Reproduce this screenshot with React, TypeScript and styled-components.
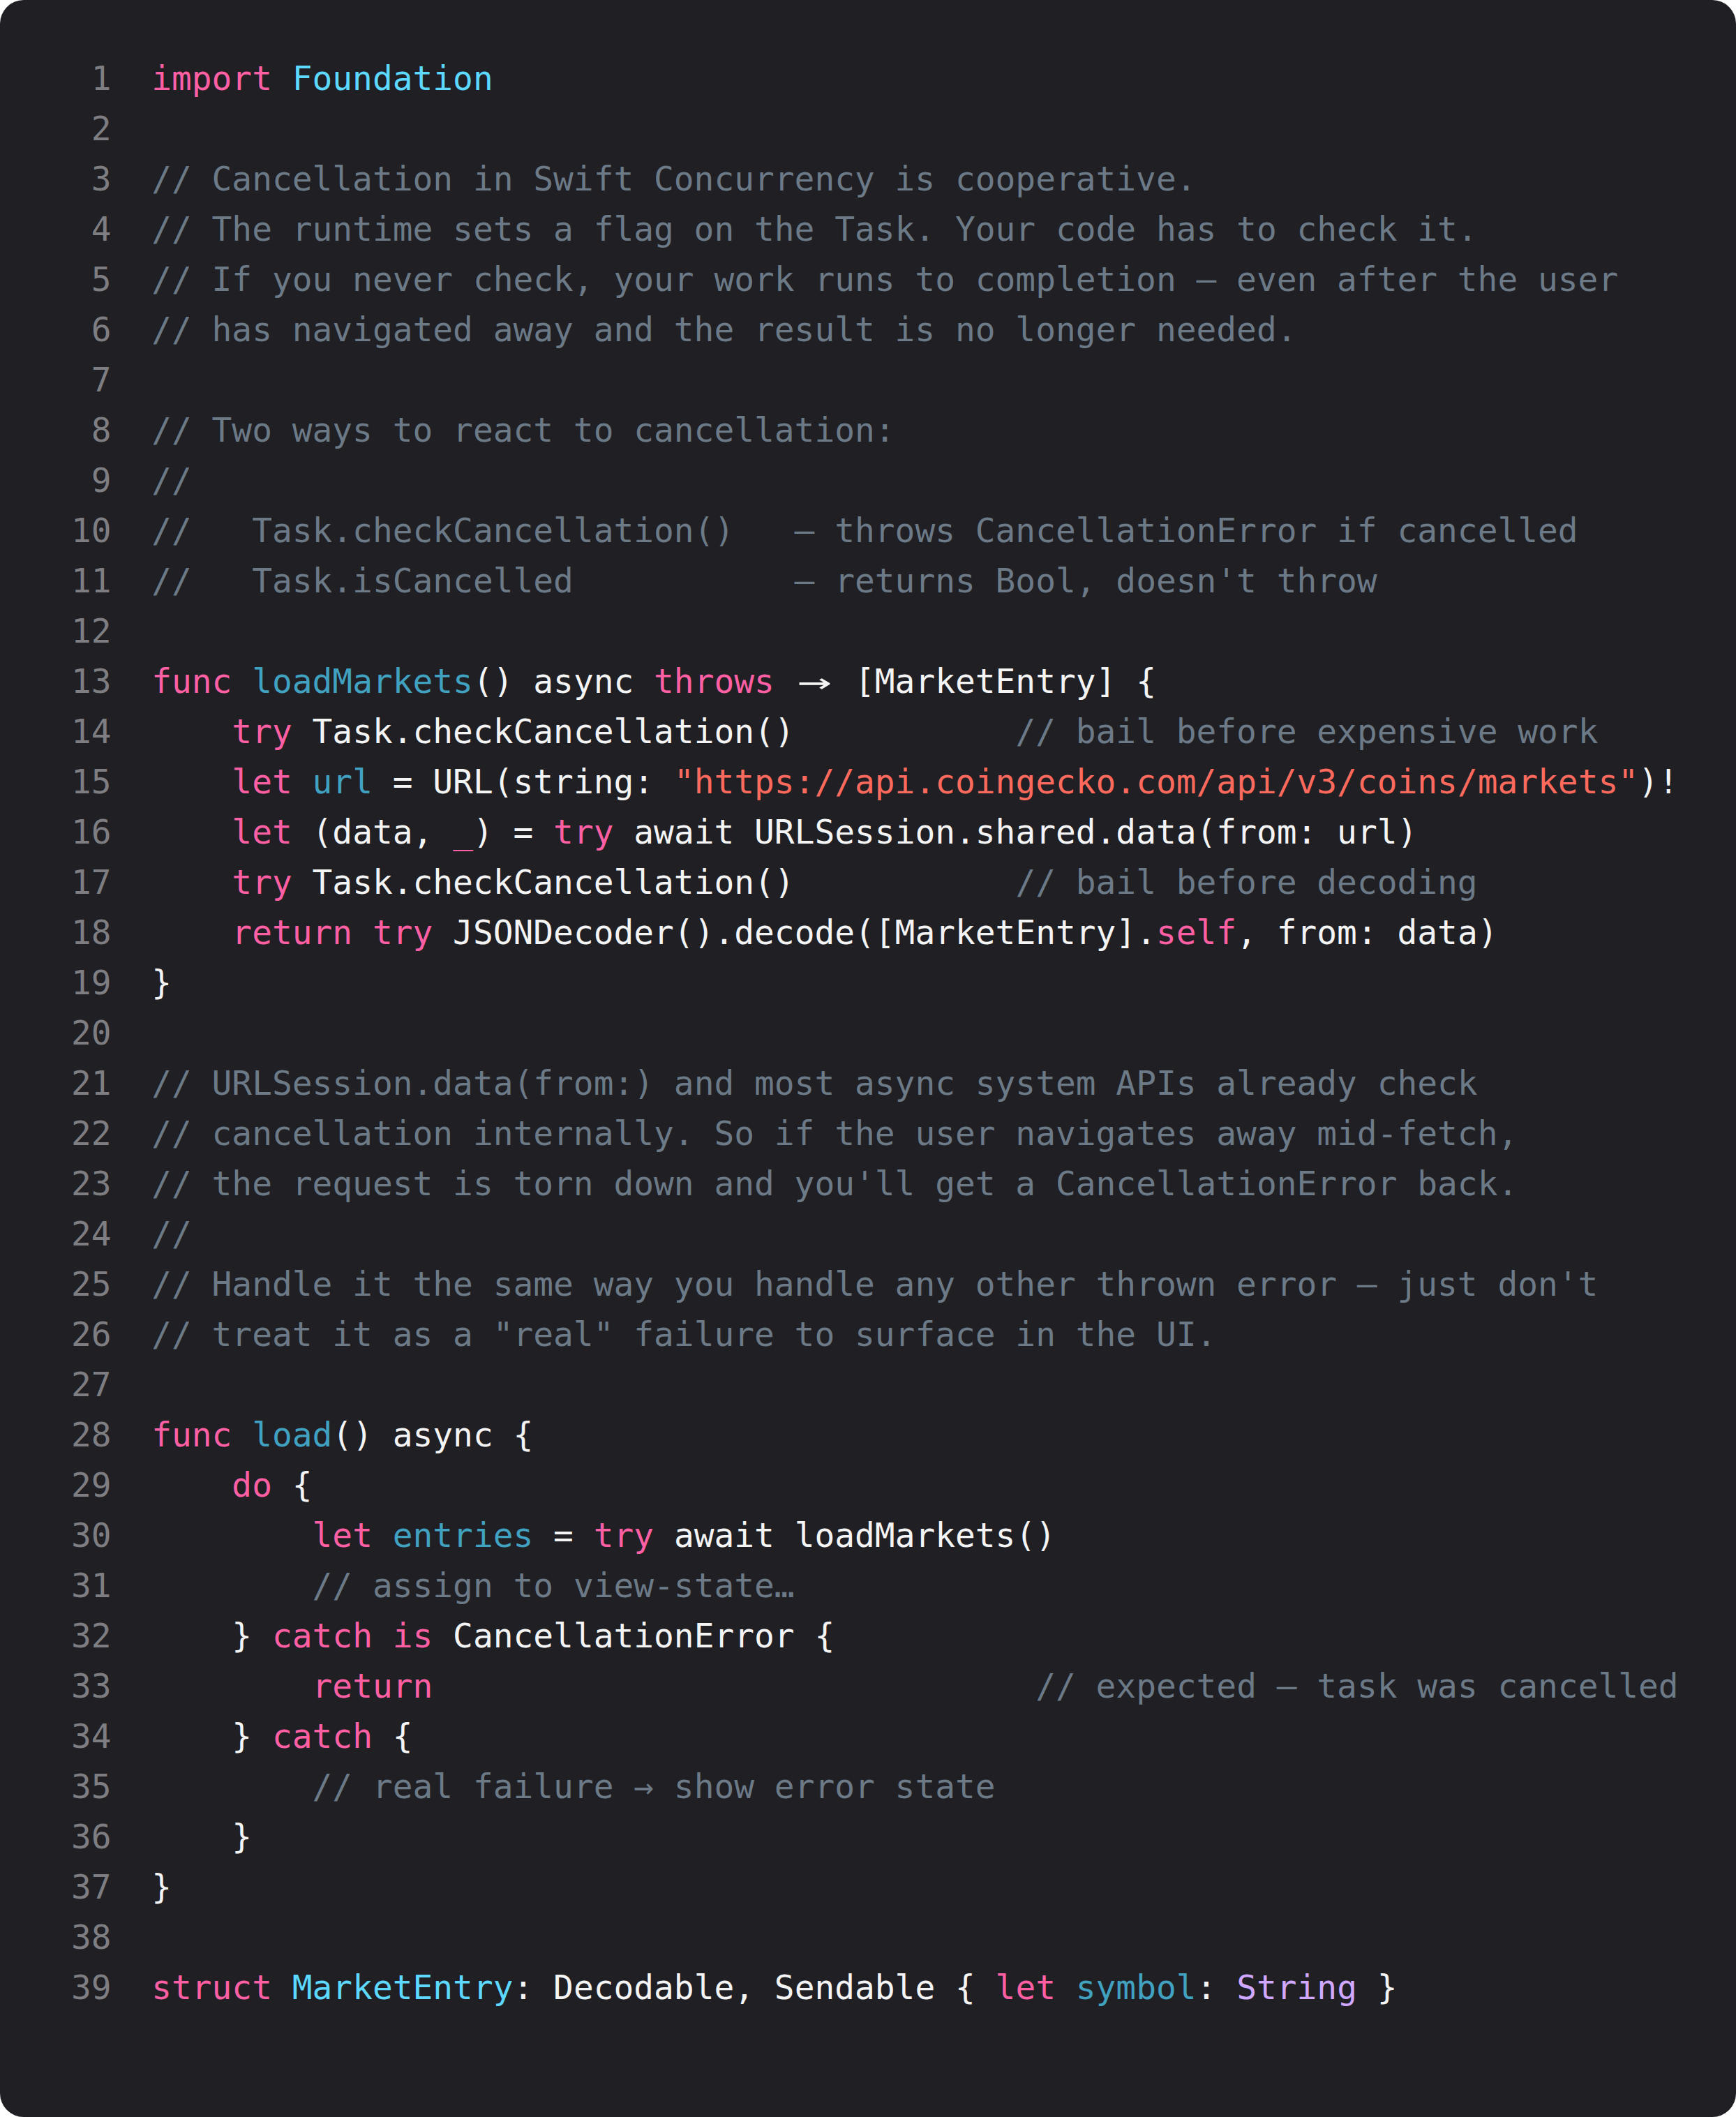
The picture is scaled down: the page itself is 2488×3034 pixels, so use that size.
import React from "react";
import styled, { createGlobalStyle } from "styled-components";

const GlobalStyle = createGlobalStyle`
  html, body {
    margin: 0;
    padding: 0;
    background: #ffffff;
  }
  #root {
    min-height: 100vh;
  }
`;

type Kind = "plain" | "kw" | "type" | "decl" | "comment" | "str" | "cls" | "arrow";

const colors: Record<Kind, string> = {
  plain: "#f4f4f5",
  kw: "#fc5fa3",
  type: "#5dd8ff",
  decl: "#41a1c0",
  comment: "#6c7986",
  str: "#fc6a5d",
  cls: "#d0a8ff",
  arrow: "#f4f4f5",
};

const Card = styled.div`
  box-sizing: border-box;
  width: 100%;
  min-height: 100vh;
  background: #1f1f24;
  border-radius: 34px;
  padding: 77px 40px 120px 102px;
  font-family: "DejaVu Sans Mono", "Liberation Mono", monospace;
  font-size: 47.84px;
  line-height: 72px;
  color: ${colors.plain};
  display: flex;
  flex-direction: column;
`;

const Row = styled.div`
  display: flex;
  align-items: baseline;
  height: 72px;
`;

const LineNumber = styled.span`
  flex: 0 0 auto;
  min-width: 2ch;
  margin-right: 2ch;
  text-align: right;
  color: #7e7e82;
`;

const Code = styled.span`
  white-space: pre;
`;

const Token = styled.span<{ $kind: Kind }>`
  color: ${(p) => colors[p.$kind]};
`;

const Arrow = styled.span`
  display: inline-block;
  width: 2ch;
  text-align: center;
  color: ${colors.plain};
  transform: scaleX(1.7);
`;

type Tok = [Kind, string];
const P = (t: string): Tok => ["plain", t];
const K = (t: string): Tok => ["kw", t];
const T = (t: string): Tok => ["type", t];
const D = (t: string): Tok => ["decl", t];
const C = (t: string): Tok => ["comment", t];
const S = (t: string): Tok => ["str", t];
const L = (t: string): Tok => ["cls", t];
const A: Tok = ["arrow", "→"];

const lines: Tok[][] = [
  [K("import"), P(" "), T("Foundation")],
  [],
  [C("// Cancellation in Swift Concurrency is cooperative.")],
  [C("// The runtime sets a flag on the Task. Your code has to check it.")],
  [C("// If you never check, your work runs to completion — even after the user")],
  [C("// has navigated away and the result is no longer needed.")],
  [],
  [C("// Two ways to react to cancellation:")],
  [C("//")],
  [C("//   Task.checkCancellation()   — throws CancellationError if cancelled")],
  [C("//   Task.isCancelled           — returns Bool, doesn't throw")],
  [],
  [K("func"), P(" "), D("loadMarkets"), P("() async "), K("throws"), P(" "), A, P(" [MarketEntry] {")],
  [P("    "), K("try"), P(" Task.checkCancellation()           "), C("// bail before expensive work")],
  [
    P("    "),
    K("let"),
    P(" "),
    D("url"),
    P(" = URL(string: "),
    S('"https://api.coingecko.com/api/v3/coins/markets"'),
    P(")!"),
  ],
  [P("    "), K("let"), P(" (data, "), K("_"), P(") = "), K("try"), P(" await URLSession.shared.data(from: url)")],
  [P("    "), K("try"), P(" Task.checkCancellation()           "), C("// bail before decoding")],
  [P("    "), K("return"), P(" "), K("try"), P(" JSONDecoder().decode([MarketEntry]."), K("self"), P(", from: data)")],
  [P("}")],
  [],
  [C("// URLSession.data(from:) and most async system APIs already check")],
  [C("// cancellation internally. So if the user navigates away mid-fetch,")],
  [C("// the request is torn down and you'll get a CancellationError back.")],
  [C("//")],
  [C("// Handle it the same way you handle any other thrown error — just don't")],
  [C('// treat it as a "real" failure to surface in the UI.')],
  [],
  [K("func"), P(" "), D("load"), P("() async {")],
  [P("    "), K("do"), P(" {")],
  [P("        "), K("let"), P(" "), D("entries"), P(" = "), K("try"), P(" await loadMarkets()")],
  [P("        "), C("// assign to view-state…")],
  [P("    } "), K("catch"), P(" "), K("is"), P(" CancellationError {")],
  [P("        "), K("return"), P("                              "), C("// expected — task was cancelled")],
  [P("    } "), K("catch"), P(" {")],
  [P("        "), C("// real failure → show error state")],
  [P("    }")],
  [P("}")],
  [],
  [
    K("struct"),
    P(" "),
    T("MarketEntry"),
    P(": Decodable, Sendable { "),
    K("let"),
    P(" "),
    D("symbol"),
    P(": "),
    L("String"),
    P(" }"),
  ],
];

export default function App() {
  return (
    <>
      <GlobalStyle />
      <Card>
        {lines.map((toks, i) => (
          <Row key={i}>
            <LineNumber>{i + 1}</LineNumber>
            <Code>
              {toks.length === 0
                ? " "
                : toks.map(([kind, text], j) =>
                    kind === "arrow" ? (
                      <Arrow key={j}>{text}</Arrow>
                    ) : (
                      <Token key={j} $kind={kind}>
                        {text}
                      </Token>
                    )
                  )}
            </Code>
          </Row>
        ))}
      </Card>
    </>
  );
}
